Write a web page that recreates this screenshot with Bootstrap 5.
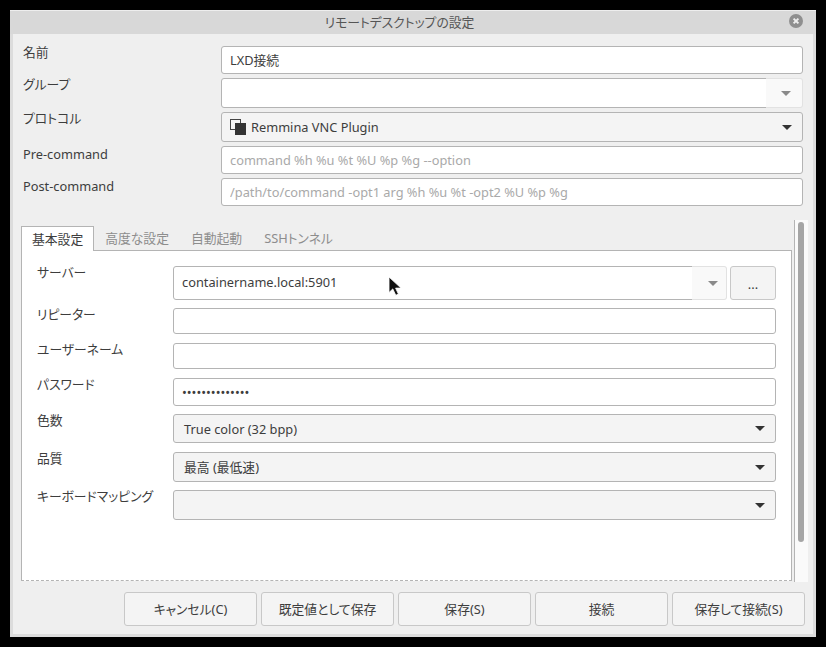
<!DOCTYPE html>
<html lang="ja">
  <head>
    <meta charset="UTF-8" />
    <meta name="viewport" content="width=device-width, initial-scale=1.0" />
    <title>リモートデスクトップの設定</title>
    <link
      rel="stylesheet"
      href="https://cdn.jsdelivr.net/npm/bootstrap@5.3.0/dist/css/bootstrap.min.css"
    />
    <style>
      body {
        background: #000;
        font-family: "Noto Sans", "Noto Sans CJK JP", sans-serif;
        font-size: 12.8px;
        font-feature-settings: "palt";
        color: #3d3d3d;
        overflow: hidden;
      }
      .app-window {
        position: relative;
        width: 806px;
        height: 627px;
        margin: 10px;
        background: #efefef;
        border: solid #dcdcdc;
        border-width: 0 3px 3px 3px;
        border-radius: 3px 3px 0 0;
      }
      .title-bar {
        height: 24px;
        margin: 0 -3px;
        padding: 1px 27px 0 0;
        background: #d8d8d8;
        border-top: 1px solid #eee;
        color: #555;
      }
      .close-dot {
        position: absolute;
        right: 10px;
        top: 4px;
        width: 14px;
        height: 14px;
      }
      .top-form {
        display: grid;
        grid-template-columns: 198px 582px;
        row-gap: 4px;
        margin: 12px 0 0 10px;
      }
      .field-label {
        line-height: 12px;
        margin: 0;
        color: #3d3d3d;
      }
      .latin-label {
        padding-top: 2px;
      }
      .h-28 { height: 28px; }
      .h-26 { height: 26px; }
      .h-27 { height: 27px; }
      .h-29 { height: 29px; }
      .h-30 { height: 30px; }
      .h-34 { height: 34px; }
      .app-input.form-control {
        font-size: 12.8px;
        font-feature-settings: "palt";
        color: #3d3d3d;
        padding: 0 8px;
        border: 1px solid #b4b4b4;
        border-radius: 3px;
        box-shadow: none;
      }
      .app-input.form-control::placeholder {
        color: #a9a9a9;
      }
      .value-input.form-control {
        padding-bottom: 2px;
      }
      .combo-btn.btn {
        flex: 0 0 auto;
        background: #f9f9f9;
        border: 1px solid #e2e2e2;
        border-left: 0;
        border-radius: 0 3px 3px 0;
      }
      .combo-wide.btn { width: 37px; padding: 0 0 0 3px; }
      .combo-narrow.btn { width: 35px; padding: 0 0 0 7px; }
      .select-box.btn {
        font-size: 12.8px;
        font-feature-settings: "palt";
        color: #3d3d3d;
        padding: 2px 10px 0;
        background: #f4f4f4;
        border: 1px solid #b4b4b4;
        border-radius: 3px;
      }
      .select-box .caret-dark {
        margin-top: -2px;
      }
      .select-box.with-icon {
        padding-left: 8px;
      }
      .caret-dark {
        width: 0;
        height: 0;
        border-left: 5px solid transparent;
        border-right: 5px solid transparent;
        border-top: 5px solid #333;
      }
      .caret-gray {
        width: 0;
        height: 0;
        border-left: 5px solid transparent;
        border-right: 5px solid transparent;
        border-top: 5px solid #8a8a8a;
      }
      .protocol-icon {
        margin: -2px 5px 0 0;
      }
      .tabs-area {
        position: relative;
        margin: 20px 0 0 8px;
        height: 355px;
      }
      .tab-strip {
        height: 24px;
      }
      .tab-item {
        padding: 0 11px;
        line-height: 25px;
        color: #8d8d8d;
        white-space: nowrap;
      }
      .tab-item.is-active {
        height: 25px;
        padding: 0 10px;
        color: #3d3d3d;
        background: #fff;
        border: 1px solid #b4b4b4;
        border-bottom: 0;
        position: relative;
        z-index: 1;
      }
      .tab-panel {
        width: 771px;
        height: 331px;
        background: #fff;
        border: 1px solid #b4b4b4;
        border-bottom: 1px dashed #b4b4b4;
        padding: 15px 15px 0 15px;
      }
      .panel-form {
        display: grid;
        grid-template-columns: 136px 603px;
      }
      .gap-after-8 { margin-bottom: 8px; }
      .gap-after-9 { margin-bottom: 9px; }
      .server-more.btn {
        flex: 0 0 46px;
        margin-left: 3px;
        padding: 4px 0 0;
        font-size: 12.8px;
        color: #3d3d3d;
        background: #f4f4f4;
        border: 1px solid #c8c8c8;
        border-radius: 3px;
      }
      .v-scroll {
        position: absolute;
        left: 773px;
        top: -6px;
        width: 14px;
        height: 362px;
        background: #fafafa;
        border-left: 1px solid #b4b4b4;
      }
      .v-thumb {
        width: 6px;
        height: 320px;
        margin: 2px 0 0 3px;
        background: #a5a5a5;
        border-radius: 3px;
      }
      .action-bar {
        margin: 11px 8px 0 0;
        gap: 4px;
      }
      .action-btn.btn {
        width: 133px;
        height: 34px;
        padding: 2px 0 0;
        font-size: 12.8px;
        font-feature-settings: "palt";
        color: #3d3d3d;
        background: #f4f4f4;
        border: 1px solid #c8c8c8;
        border-radius: 3px;
      }
      .mouse-arrow {
        position: absolute;
        left: 375px;
        top: 266px;
        width: 14px;
        height: 20px;
      }
    </style>
  </head>

  <body>
    <div class="app-window">
      <!-- Title bar -->
      <div class="title-bar d-flex align-items-center justify-content-center">
        リモートデスクトップの設定
      </div>
      <svg class="close-dot" viewBox="0 0 14 14">
        <circle cx="7" cy="7" r="7" fill="#8f8f8f" />
        <path d="M4.6 4.6l4.8 4.8M9.4 4.6l-4.8 4.8" stroke="#eee" stroke-width="2" />
      </svg>

      <!-- Connection fields -->
      <div class="top-form">
        <label class="field-label">名前</label>
        <input class="form-control app-input value-input h-28" type="text" value="LXD接続" />

        <label class="field-label">グループ</label>
        <div class="input-group h-30">
          <input class="form-control app-input h-30" type="text" />
          <button class="btn combo-btn combo-wide d-flex align-items-center justify-content-center" type="button" aria-label="グループ">
            <span class="caret-gray"></span>
          </button>
        </div>

        <label class="field-label">プロトコル</label>
        <button class="btn select-box with-icon h-30 d-flex align-items-center" type="button">
          <svg class="protocol-icon" width="16" height="16" viewBox="0 0 16 16">
            <rect x="0.5" y="0.5" width="10" height="10" fill="none" stroke="#444" />
            <rect x="5" y="4" width="11" height="12" fill="#333" />
          </svg>
          Remmina VNC Plugin
          <span class="caret-dark ms-auto"></span>
        </button>

        <label class="field-label latin-label">Pre-command</label>
        <input class="form-control app-input h-28" type="text" placeholder="command %h %u %t %U %p %g --option" />

        <label class="field-label latin-label">Post-command</label>
        <input class="form-control app-input h-28" type="text" placeholder="/path/to/command -opt1 arg %h %u %t -opt2 %U %p %g" />
      </div>

      <!-- Tabs -->
      <div class="tabs-area">
        <div class="tab-strip d-flex">
          <div class="tab-item is-active">基本設定</div>
          <div class="tab-item">高度な設定</div>
          <div class="tab-item">自動起動</div>
          <div class="tab-item">SSHトンネル</div>
        </div>
        <div class="tab-panel">
          <div class="panel-form">
            <label class="field-label">サーバー</label>
            <div class="d-flex h-34 gap-after-8">
              <div class="input-group flex-grow-1 w-auto">
                <input class="form-control app-input value-input h-34" type="text" value="containername.local:5901" />
                <button class="btn combo-btn combo-narrow d-flex align-items-center justify-content-center" type="button" aria-label="サーバー">
                  <span class="caret-gray"></span>
                </button>
              </div>
              <button class="btn server-more" type="button">...</button>
            </div>

            <label class="field-label">リピーター</label>
            <input class="form-control app-input h-26 gap-after-9" type="text" />

            <label class="field-label">ユーザーネーム</label>
            <input class="form-control app-input h-26 gap-after-9" type="text" />

            <label class="field-label">パスワード</label>
            <input class="form-control app-input h-28 gap-after-8" type="password" value="aaaaaaaaaaaaaa" />

            <label class="field-label">色数</label>
            <button class="btn select-box h-29 gap-after-9 d-flex align-items-center" type="button">
              True color (32 bpp)
              <span class="caret-dark ms-auto"></span>
            </button>

            <label class="field-label">品質</label>
            <button class="btn select-box h-30 gap-after-8 d-flex align-items-center" type="button">
              最高 (最低速)
              <span class="caret-dark ms-auto"></span>
            </button>

            <label class="field-label">キーボードマッピング</label>
            <button class="btn select-box h-30 d-flex align-items-center" type="button">
              <span class="caret-dark ms-auto"></span>
            </button>
          </div>
        </div>
        <div class="v-scroll"><div class="v-thumb"></div></div>
      </div>

      <!-- Actions -->
      <div class="action-bar d-flex justify-content-end">
        <button class="btn action-btn" type="button">キャンセル(C)</button>
        <button class="btn action-btn" type="button">既定値として保存</button>
        <button class="btn action-btn" type="button">保存(S)</button>
        <button class="btn action-btn" type="button">接続</button>
        <button class="btn action-btn" type="button">保存して接続(S)</button>
      </div>

      <svg class="mouse-arrow" viewBox="0 0 14 20">
        <path d="M1 1v15.5l3.8-3.6 3 6.4 2.6-1.2-2.8-6h5.4z" fill="#111" stroke="#fff" stroke-width="0.8" />
      </svg>
    </div>

    <script src="https://cdn.jsdelivr.net/npm/bootstrap@5.3.0/dist/js/bootstrap.bundle.min.js"></script>
  </body>
</html>
